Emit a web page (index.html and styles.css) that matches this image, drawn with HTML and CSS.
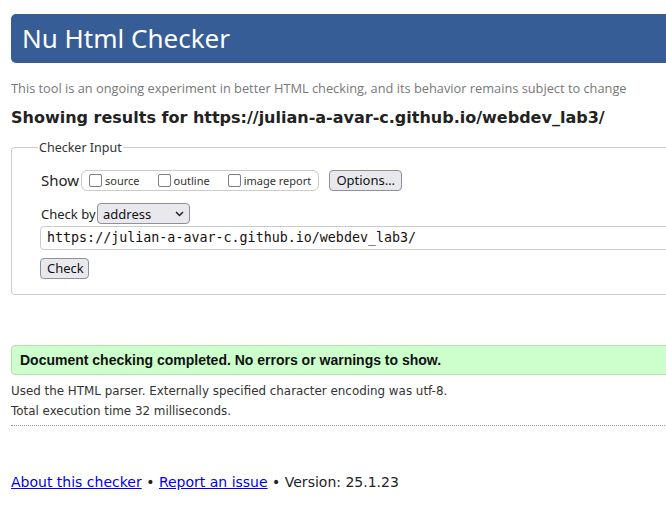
FILE: index.html
```html
<!DOCTYPE html>
<html>
<head>
<meta charset="utf-8">
<title>Nu Html Checker</title>
<link rel="stylesheet" href="styles.css">
</head>
<body>
<div class="page">
  <h1 class="banner">Nu Html Checker</h1>
  <p class="intro">This tool is an ongoing experiment in better HTML checking, and its behavior remains subject to change</p>
  <h2 class="showing">Showing results for https://julian-a-avar-c.github.io/webdev_lab3/</h2>
  <fieldset class="checker">
    <legend class="legend">Checker Input</legend>
    <div class="show-row">
      <span class="show-label">Show</span>
      <div class="show-box">
        <label class="opt"><span class="cb"></span>source</label>
        <label class="opt"><span class="cb"></span>outline</label>
        <label class="opt"><span class="cb"></span>image report</label>
      </div>
      <button class="btn options">Options…</button>
    </div>
    <div class="by-row">
      <span class="by-label">Check by</span>
      <div class="select">address<svg class="chev" width="9" height="6" viewBox="0 0 9 6"><path d="M1 1 L4.5 4.5 L8 1" fill="none" stroke="#222" stroke-width="1.5"/></svg></div>
    </div>
    <div class="url">https://julian-a-avar-c.github.io/webdev_lab3/</div>
    <button class="btn check">Check</button>
  </fieldset>
  <div class="success">Document checking completed. No errors or warnings to show.</div>
  <p class="details">Used the HTML parser. Externally specified character encoding was utf-8.</p>
  <p class="details">Total execution time 32 milliseconds.</p>
  <hr class="dotted">
  <p class="footer"><a href="#">About this checker</a> • <a href="#">Report an issue</a> • Version: 25.1.23</p>
</div>
</body>
</html>
```
FILE: styles.css
```css
html, body { margin: 0; padding: 0; overflow: hidden; background: #fff; }
body { font-family: "DejaVu Sans", sans-serif; color: #222; }
.page { width: 700px; padding: 14px 0 0 11px; }
.banner {
  margin: 0; height: 49px; box-sizing: border-box;
  background: #365d95; color: #fff; border-radius: 5px;
  font-family: "Noto Sans", sans-serif; font-weight: 400; font-size: 26px;
  line-height: 49px; padding-left: 11px;
}
.intro {
  margin: 17px 0 0; font-family: "Open Sans", sans-serif; font-size: 12.8px;
  color: #777; line-height: 17px; white-space: nowrap;
}
.showing {
  margin: 10px 0 0; font-family: "DejaVu Sans", sans-serif; font-weight: bold;
  font-size: 16px; line-height: 22px; color: #222;
}
.checker {
  margin: 10px 0 0; border: 1px solid #ccc; border-radius: 4px;
  padding: 11px 0 15px 29px; height: 156px; box-sizing: border-box;
}
.legend {
  font-family: "Noto Sans", sans-serif; font-size: 12.5px; color: #333;
  padding: 0 1px; margin-left: -3px;
}
.show-row { display: flex; align-items: center; height: 22px; margin-top: 2px; }
.show-label { font-family: "Noto Sans", sans-serif; font-size: 15px; color: #222; width: 40px; }
.show-box {
  display: flex; align-items: center; height: 21px; box-sizing: border-box;
  border: 1px solid #ccc; border-radius: 6px; padding: 0 7px 0 7px;
  white-space: nowrap; flex: none;
}
.opt {
  display: flex; align-items: center; font-family: "Noto Sans", sans-serif;
  font-size: 11px; color: #333; margin-right: 18px; white-space: nowrap; flex: none;
}
.opt:last-child { margin-right: 0; }
.cb {
  width: 13px; height: 13px; box-sizing: border-box; border: 1px solid #7d7d8a; border-radius: 2px;
  margin-right: 3px; display: inline-block; background: #fff; flex: none;
}
.btn {
  font-family: "Noto Sans", sans-serif; font-size: 13px; color: #111;
  background: #e9e9ed; border: 1px solid #8f8f9d; border-radius: 4px;
  padding: 0 6px; height: 21px; line-height: 19px; box-sizing: border-box;
}
.options { margin-left: 10px; width: 73px; flex: none; }
.by-row { display: flex; align-items: center; margin-top: 12px; height: 21px; }
.by-label { font-family: "Noto Sans", sans-serif; font-size: 13px; color: #222; width: 56px; }
.select {
  display: flex; align-items: center; justify-content: space-between;
  width: 93px; height: 21px; box-sizing: border-box; padding: 0 5px 0 5px;
  background: #e9e9ed; border: 1px solid #8f8f9d; border-radius: 4px;
  font-family: "Noto Sans", sans-serif; font-size: 13px; color: #111;
}
.url {
  margin: 2px 0 0 -1px; height: 24px; box-sizing: border-box;
  border: 1px solid #ccc; border-radius: 4px; padding: 0 6px;
  font-family: "DejaVu Sans Mono", monospace; font-size: 13.33px; line-height: 22px; color: #111;
}
.check { margin: 8px 0 0 -1px; width: 49px; height: 21px; display: block; }
.success {
  margin-top: 50px; height: 30px; box-sizing: border-box;
  background: #ccffcc; border: 1px solid #b3ddb3; border-radius: 4px;
  font-family: "Liberation Sans", sans-serif; font-weight: bold; font-size: 14px;
  line-height: 28px; padding-left: 8px; color: #111;
}
.details { margin: 0; font-size: 11.9px; line-height: 20px; color: #333; }
.success + .details { margin-top: 6px; }
.dotted { margin: 4px 0 0; border: 0; border-top: 1px dotted #999; height: 0; }
.footer { margin: 46px 0 0; font-size: 14px; color: #222; line-height: 20px; }
.footer a { color: #0000ee; }
```
